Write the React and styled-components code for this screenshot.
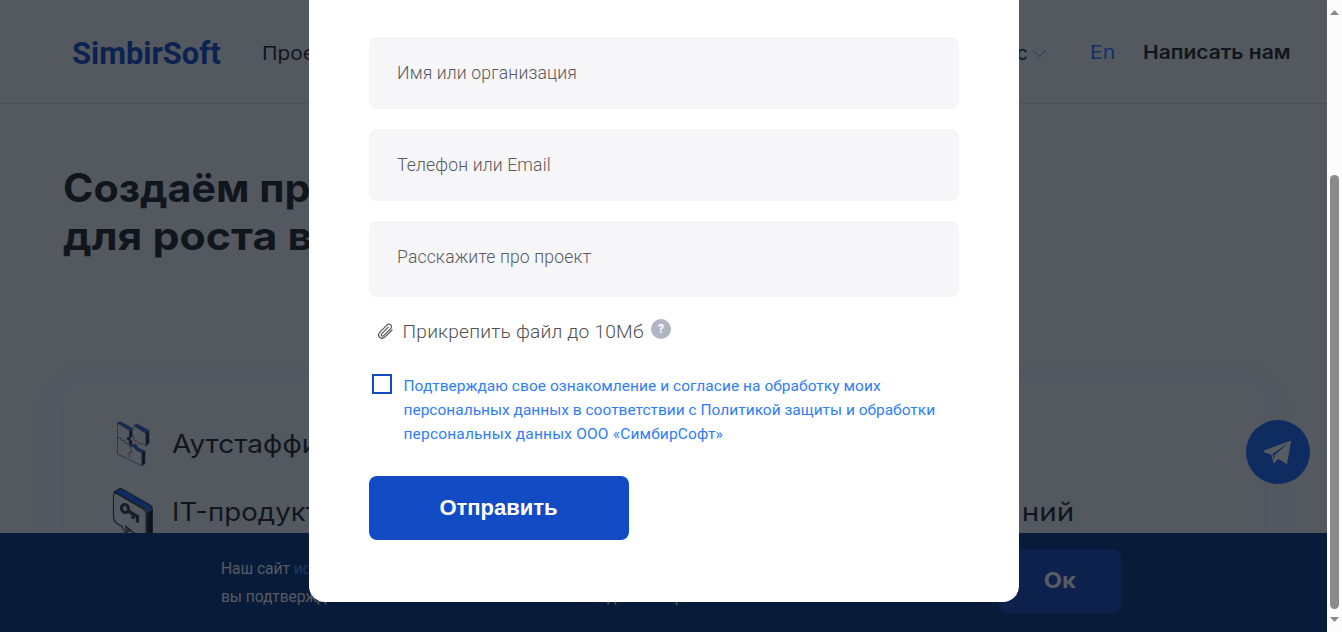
import React from 'react';
import styled, { createGlobalStyle } from 'styled-components';

const GlobalStyle = createGlobalStyle`
  *, *::before, *::after { box-sizing: border-box; }
  body { margin: 0; overflow: hidden; }
  h1, p { margin: 0; }
  button { border: 0; padding: 0; }
`;

const display = 'Inter, "Liberation Sans", sans-serif';
const body = 'Roboto, "Liberation Sans", sans-serif';

const Screen = styled.div`
  display: grid;
  grid-template-columns: 1fr 15px;
  width: 1342px;
  height: 632px;
  overflow: hidden;
`;

const Page = styled.div`
  position: relative;
  height: 632px;
  overflow: hidden;
  background: #545960;
  color: #11161d;
  font-family: ${display};
`;

const Wide = styled.span`
  display: inline-block;
  white-space: nowrap;
  transform: scaleX(${(p) => p.$stretch});
  transform-origin: ${(p) => p.$origin || 'left'} center;
`;

const Header = styled.header`
  display: flex;
  align-items: center;
  height: 104px;
  padding: 1px 36.5px 0 72px;
  border-bottom: 1px solid #4c5158;
`;

const Logo = styled.span`
  width: 190px;
  padding-top: 2px;
  color: #0c2251;
  font: 700 32px/40px ${body};
`;

const Nav = styled.nav`
  display: flex;
  justify-content: space-between;
  width: 784px;
  padding-top: 3px;
`;

const NavItem = styled.span`
  display: flex;
  align-items: center;
  gap: 5px;
  font-size: 19px;
  line-height: 28px;
  font-weight: ${(p) => (p.$strong ? 600 : 400)};
  color: ${(p) => p.$color || 'inherit'};
`;

const Actions = styled.div`
  display: flex;
  justify-content: space-between;
  width: 201px;
  margin-left: auto;
  padding-top: 1px;
`;

const Title = styled.h1`
  display: grid;
  padding: 60px 0 0 63px;
  font-size: 39px;
  line-height: 48px;
  font-weight: 700;
`;

const Services = styled.section`
  display: grid;
  grid-template-columns: 1fr 1fr;
  align-content: start;
  row-gap: 18px;
  width: 1200px;
  height: 400px;
  margin: 119px 0 0 64px;
  padding: 40px 190px 0 48px;
  border-radius: 20px;
  background: #545960;
  box-shadow: 0 10px 26px 0 rgba(70, 75, 83, 0.25);
`;

const Service = styled.div`
  display: flex;
  align-items: center;
  justify-content: ${(p) => (p.$end ? 'flex-end' : 'flex-start')};
  gap: 17px;
  height: 50px;
  font-size: 25.5px;

  > span {
    padding-bottom: 2px;
  }
`;

const CookieBar = styled.aside`
  position: absolute;
  inset: auto 0 0 0;
  display: flex;
  justify-content: space-between;
  align-items: flex-start;
  height: 99px;
  padding: 16px 206px 0 221px;
  background: #081c3a;
`;

const CookieCopy = styled.p`
  width: 467px;
  padding-top: 6px;
  font: 400 15.7px/28px ${body};
  color: #565b62;
  letter-spacing: -0.1px;
`;

const CookieLine = styled.span`
  display: flex;
  white-space: pre;
`;

const CookieLink = styled.span`
  color: #1d375f;
`;

const CookieLead = styled.span`
  width: 386px;
`;

const OkButton = styled.button`
  width: 122px;
  height: 64px;
  padding-bottom: 2px;
  border-radius: 8px;
  background: #0e214c;
  color: #575c65;
  font: 700 22px ${display};
`;

const ChatButton = styled.button`
  position: absolute;
  left: 1246px;
  top: 420px;
  width: 64px;
  height: 64px;
  border-radius: 50%;
  background: #0e2c5f;
`;

const Modal = styled.form`
  position: absolute;
  left: 309px;
  top: -40px;
  width: 710px;
  height: 642px;
  padding: 77px 60px 0;
  border-radius: 16px;
  background: #fff;
  font-family: ${body};
`;

const Fields = styled.div`
  display: grid;
  gap: 20px;
`;

const Field = styled.div`
  height: ${(p) => p.$height || 72}px;
  padding: 22px 28px 0;
  border-radius: 8px;
  background: #f6f6f9;
  color: #58595b;
  font-size: 17.6px;
  line-height: 28px;
  font-weight: 300;
  letter-spacing: 0.14px;
`;

const Attach = styled.div`
  display: flex;
  align-items: center;
  height: 30px;
  margin-top: 19px;
  padding-left: 8px;
  color: #505050;
  font-size: 19.2px;
  font-weight: 300;
  letter-spacing: 0.2px;
`;

const AttachLabel = styled.span`
  width: 248px;
  padding-left: 8.5px;
  margin-right: 9px;
  white-space: nowrap;
`;

const Hint = styled.span`
  display: grid;
  place-items: center;
  width: 20px;
  height: 20px;
  margin-bottom: 4px;
  border-radius: 50%;
  background: #b0b5c4;
  color: #fff;
  font: 700 12px ${body};
`;

const Consent = styled.label`
  display: flex;
  gap: 11.5px;
  margin-top: 28px;
  padding-left: 3px;
`;

const Checkbox = styled.span`
  width: 20px;
  height: 20px;
  border: 2px solid #134bc5;
`;

const ConsentText = styled.span`
  color: #2f7df8;
  font-size: 15.5px;
  line-height: 24px;
`;

const ConsentLine = styled.span`
  display: block;
  white-space: nowrap;
  letter-spacing: ${(p) => p.$spacing}px;
`;

const Submit = styled.button`
  display: block;
  width: 260px;
  height: 64px;
  margin-top: 30px;
  padding-right: 1px;
  border-radius: 8px;
  background: #134bc5;
  color: #fff;
  font: 700 22px "Liberation Sans", sans-serif;
`;

const Scrollbar = styled.div`
  display: flex;
  flex-direction: column;
  align-items: center;
  padding-top: 10px;
  background: #fcfcfc;
`;

const Thumb = styled.div`
  width: 9px;
  height: 434px;
  margin: 160px 0 8px;
  border-radius: 5px;
  background: #8b8b8b;
`;

const Arrow = styled.svg`
  display: block;
  width: 9px;
  height: 5px;
  fill: #8b8b8b;
`;

const Chevron = () => (
  <svg width="13" height="8" viewBox="0 0 13 8" fill="none" stroke="#40454d" strokeWidth="1.4">
    <path d="M.7.8 6.5 6.6 12.3.8" />
  </svg>
);

const PuzzleIcon = () => (
  <svg width="43" height="50" viewBox="0 -2 43 50" fill="none" stroke="#252a33" strokeWidth=".7" strokeLinejoin="round">
    <path fill="#0e2c5f" d="m5.500 2 3-1.300 11.500 6.300v3l-2.500-.5zM22 4.500l3-1.500 12 6.500v1.500l-3 1.500z" />
    <path fill="#10102b" d="m34 12 3-2v12l-3 3zM30 31l3-1.500v13L30 45zM17.500 9.500l2.500 0v6l-2 2 2 3v4l-2.500-1-.5-4-2.500-2 3-2z" />
    <path fill="#0e2c5f" d="m18 23 3 1 3-1 2 4 6 2.500L30 32l-6-3-2-3-4-.5z" />
    <path d="M5.500 2v31L30 45V31M5.500 2l12 7v13M5.500 17l3-.5 1 3 3-.5.5 3 5 2v4l2 1-1 3-2-1 1 6M22 4.500 34 12v12.500l-4-2-2 1-2-3-4-1v-4l-2-1V9l2-1z" />
  </svg>
);

const KeyIcon = () => (
  <svg width="43" height="50" viewBox="0 -1 43 50" fill="none" stroke="#191e27" strokeWidth="1.100" strokeLinejoin="round">
    <path fill="#0e2c5f" d="M2 4 7 1q2-1 4 .5L38 17q2.500 1.500 2.500 5L35 27V22L4 5z" />
    <path fill="#0a1422" d="m35 26 5.500-4v27L35 50z" />
    <path fill="#545960" d="M1.500 8q0-4 4-2L31 21q3 2 3 5v25l-8-4-7-4-4-2v7l-5-9.500-5-3q-3.500-2.500-3.500-6z" />
    <path d="m13.500 38 1 6 4.500-1.500z" />
    <ellipse cx="13" cy="20.500" rx="3.400" ry="4" strokeWidth="3.200" transform="rotate(-22 13 20.500)" />
    <path strokeWidth="3.200" strokeLinejoin="miter" d="m16 23 9.500 5.500v6M21 26v5" />
  </svg>
);

const PlaneIcon = () => (
  <svg width="64" height="64" viewBox="0 0 64 64" fill="#565b62">
    <path fillRule="evenodd" d="M18 30.600 44.300 20.800q.9-.2.700.8L41.200 43.400q-.3 1-1.200.4L32.300 38.800 28.400 43q-.7.600-.9-.4L25.200 34.600 18.300 32.500q-1.200-1-.3-1.900ZM26.500 34l1.300 5.500.8-4.300L41 24Z" />
  </svg>
);

const ClipIcon = () => (
  <svg width="17" height="17" viewBox="0 .5 17 17" fill="none" stroke="#555" strokeWidth="1.200" strokeLinecap="round">
    <path d="m15 7.500-6.700 6.700c-1.700 1.700-4 2-5.600.6-1.500-1.500-1.300-3.700.4-5.400l6.600-6.600c1.200-1.200 2.900-1.500 4-.4 1.200 1.200.9 2.800-.3 4L7 12.800c-.8.8-1.700.9-2.300.4-.6-.7-.4-1.500.4-2.300l6.300-6.300" />
  </svg>
);

export default function App() {
  return (
    <>
      <GlobalStyle />
      <Screen>
        <Page>
          <Header>
            <Logo><Wide $stretch={0.965}>SimbirSoft</Wide></Logo>
            <Nav>
              <NavItem><Wide $stretch={1.1}>Прое</Wide></NavItem>
              <NavItem><Wide $stretch={1.05} $origin="right">с</Wide><Chevron /></NavItem>
            </Nav>
            <Actions>
              <NavItem $color="#142f6b"><Wide $stretch={1.12}>En</Wide></NavItem>
              <NavItem $strong><Wide $stretch={1.105} $origin="right">Написать нам</Wide></NavItem>
            </Actions>
          </Header>
          <Title>
            <Wide $stretch={1.056}>Создаём пр</Wide>
            <Wide $stretch={1.1}>для роста в</Wide>
          </Title>
          <Services>
            <Service><PuzzleIcon /><Wide $stretch={1.1}>Аутстаффи</Wide></Service>
            <Service />
            <Service><KeyIcon /><Wide $stretch={1.085}>IT-продукт</Wide></Service>
            <Service $end><Wide $stretch={1.16} $origin="right">ний</Wide></Service>
          </Services>
          <CookieBar>
            <CookieCopy>
              <CookieLine>Наш сайт <CookieLink>исп</CookieLink></CookieLine>
              <CookieLine><CookieLead>вы подтверждаете</CookieLead>данных бр</CookieLine>
            </CookieCopy>
            <OkButton type="button"><Wide $stretch={1.08} $origin="center">Ок</Wide></OkButton>
          </CookieBar>
          <ChatButton type="button" aria-label="Telegram"><PlaneIcon /></ChatButton>
          <Modal>
            <Fields>
              <Field>Имя или организация</Field>
              <Field>Телефон или Email</Field>
              <Field $height={76}>Расскажите про проект</Field>
            </Fields>
            <Attach>
              <ClipIcon />
              <AttachLabel>Прикрепить файл до 10Мб</AttachLabel>
              <Hint>?</Hint>
            </Attach>
            <Consent>
              <Checkbox />
              <ConsentText>
                <ConsentLine $spacing={0.04}>Подтверждаю свое ознакомление и согласие на обработку моих</ConsentLine>
                <ConsentLine $spacing={0}>персональных данных в соответствии с Политикой защиты и обработки</ConsentLine>
                <ConsentLine $spacing={0.17}>персональных данных ООО «СимбирСофт»</ConsentLine>
              </ConsentText>
            </Consent>
            <Submit type="button">Отправить</Submit>
          </Modal>
        </Page>
        <Scrollbar>
          <Arrow viewBox="0 0 9 5"><path d="M0 5 4.500 0 9 5z" /></Arrow>
          <Thumb />
          <Arrow viewBox="0 0 9 5"><path d="M0 0 4.500 5 9 0z" /></Arrow>
        </Scrollbar>
      </Screen>
    </>
  );
}
